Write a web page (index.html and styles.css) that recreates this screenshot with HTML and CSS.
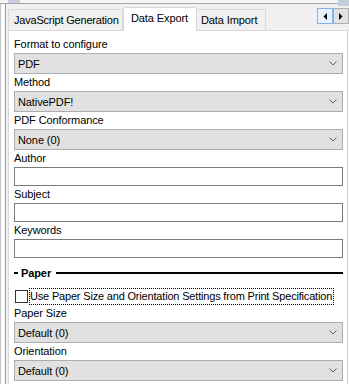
FILE: index.html
```html
<!DOCTYPE html>
<html>
<head>
  <title>Data Export</title>
  <link rel="stylesheet" href="styles.css">
</head>
<body>
  <div class="topbar">
    <div class="thumb"></div>
    <div class="thumb-end"></div>
  </div>
  <div class="window">
    <div class="edge"></div>
    <div class="content">
      <div class="tabs">
        <div class="tab tab-js">JavaScript Generation</div>
        <div class="tab tab-active">Data Export</div>
        <div class="tab tab-import">Data Import</div>
        <div class="scroller">
          <div class="scroll-btn hot">
            <svg width="4" height="7" viewBox="0 0 4 7"><polygon points="4,0 4,7 0.5,3.5" fill="#000"/></svg>
          </div>
          <div class="scroll-btn">
            <svg width="4" height="7" viewBox="0 0 4 7"><polygon points="0,0 0,7 3.5,3.5" fill="#000"/></svg>
          </div>
        </div>
      </div>

      <div class="panel">
        <div class="label">Format to configure</div>
        <div class="combo">
          <span>PDF</span>
          <svg class="chev" width="8" height="5" viewBox="0 0 8 5"><polyline points="0.5,0.5 4,4 7.5,0.5" fill="none" stroke="#606060" stroke-width="1"/></svg>
        </div>

        <div class="label">Method</div>
        <div class="combo">
          <span>NativePDF!</span>
          <svg class="chev" width="8" height="5" viewBox="0 0 8 5"><polyline points="0.5,0.5 4,4 7.5,0.5" fill="none" stroke="#606060" stroke-width="1"/></svg>
        </div>

        <div class="label">PDF Conformance</div>
        <div class="combo">
          <span>None (0)</span>
          <svg class="chev" width="8" height="5" viewBox="0 0 8 5"><polyline points="0.5,0.5 4,4 7.5,0.5" fill="none" stroke="#606060" stroke-width="1"/></svg>
        </div>

        <div class="label">Author</div>
        <div class="textbox"></div>

        <div class="label">Subject</div>
        <div class="textbox"></div>

        <div class="label">Keywords</div>
        <div class="textbox"></div>

        <div class="section">
          <div class="dash"></div>
          <span class="section-title">Paper</span>
          <div class="rule"></div>
        </div>

        <div class="check-row">
          <div class="checkbox"></div>
          <span class="check-text">Use Paper Size and Orientation Settings from Print Specification</span>
        </div>

        <div class="label">Paper Size</div>
        <div class="combo">
          <span>Default (0)</span>
          <svg class="chev" width="8" height="5" viewBox="0 0 8 5"><polyline points="0.5,0.5 4,4 7.5,0.5" fill="none" stroke="#606060" stroke-width="1"/></svg>
        </div>

        <div class="label">Orientation</div>
        <div class="combo">
          <span>Default (0)</span>
          <svg class="chev" width="8" height="5" viewBox="0 0 8 5"><polyline points="0.5,0.5 4,4 7.5,0.5" fill="none" stroke="#606060" stroke-width="1"/></svg>
        </div>
      </div>
    </div>
  </div>
</body>
</html>
```

FILE: styles.css
```css
* {
  box-sizing: border-box;
}

body {
  margin: 0;
  background-color: #f0f0f0;
  font-family: "Liberation Sans", Arial, sans-serif;
  font-size: 11px;
  letter-spacing: -0.1px;
  color: #000;
  overflow: hidden;
}

.topbar {
  display: flex;
  height: 4px;
  background-color: #f6f6f6;
  border-bottom: 1px solid #a6a6a6;
}

.thumb {
  width: 12px;
  margin-left: 8px;
  background-color: #c3cddb;
}

.thumb-end {
  width: 11px;
  height: 6px;
  margin-left: auto;
  background-color: #c3cddb;
}

.window {
  display: flex;
}

.edge {
  width: 6px;
  border-left: 1px solid #c4c4c4;
  border-right: 1px solid #9d9d9d;
  background-color: #fbfbfb;
}

.content {
  flex: 1;
  padding-left: 2px;
}

/* tab strip */
.tabs {
  display: flex;
  align-items: flex-end;
  height: 26px;
}

.tab {
  height: 21px;
  line-height: 20px;
  border: 1px solid #d9d9d9;
  border-bottom: none;
  background-color: #f0f0f0;
  white-space: nowrap;
  overflow: hidden;
}

.tab-js {
  width: 115px;
  padding-left: 5px;
  letter-spacing: -0.2px;
}

.tab-active {
  position: relative;
  z-index: 1;
  width: 74px;
  height: 24px;
  margin-bottom: -1px;
  padding-left: 7px;
  padding-bottom: 3px;
  background-color: #fff;
}

.tab-import {
  width: 69px;
  padding-left: 4px;
  border-left: none;
}

.scroller {
  display: flex;
  align-self: flex-start;
  margin-top: 4px;
  margin-left: auto;
}

.scroll-btn {
  display: flex;
  align-items: center;
  justify-content: center;
  width: 16px;
  height: 16px;
  border: 1px solid #adadad;
  background-color: #e1e1e1;
}

.scroll-btn.hot {
  border-color: #7eb4ea;
  background-color: #e5f1fb;
}

/* page */
.panel {
  width: 340px;
  padding: 5px 4px 12px 5px;
  border: 1px solid #d9d9d9;
  background-color: #fff;
}

.label {
  height: 17px;
  line-height: 17px;
  white-space: nowrap;
}

.combo {
  display: flex;
  align-items: center;
  justify-content: space-between;
  height: 21px;
  padding: 0 5px 0 3px;
  border: 1px solid #adadad;
  background-color: #e1e1e1;
}

.textbox {
  height: 19px;
  border: 1px solid #7a7a7a;
  background-color: #fff;
}

.section {
  display: flex;
  align-items: center;
  height: 17px;
  margin-top: 6px;
}

.dash {
  width: 4px;
  height: 2px;
  background-color: #000;
}

.section-title {
  margin-left: 3px;
  font-weight: bold;
}

.rule {
  flex: 1;
  height: 2px;
  margin-left: 5px;
  background-color: #000;
}

.check-row {
  display: flex;
  align-items: center;
  height: 17px;
  margin-top: 7px;
}

.checkbox {
  width: 13px;
  height: 13px;
  margin-left: 1px;
  border: 1px solid #333;
  background-color: #fff;
}

.check-text {
  height: 17px;
  line-height: 15px;
  margin-left: 1px;
  padding-right: 1px;
  border: 1px dotted #000;
  white-space: nowrap;
  letter-spacing: -0.18px;
}
```
